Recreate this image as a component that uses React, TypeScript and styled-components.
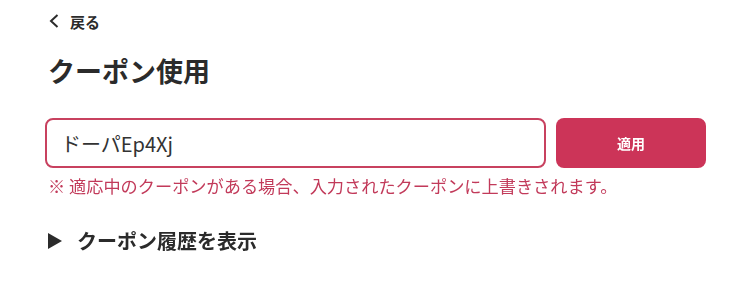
import React, { useState } from "react";
import styled, { createGlobalStyle } from "styled-components";

const GlobalStyle = createGlobalStyle`
  html, body {
    margin: 0;
    padding: 0;
    background: #fff;
  }
  body {
    font-family: "Noto Sans CJK JP", "Noto Sans", sans-serif;
    color: #2b2b2b;
  }
`

const Page = styled.div`
  width: 661px;
  padding: 9px 0 0 45px;
`

const BackLink = styled.a`
  display: flex;
  align-items: center;
  gap: 10px;
  padding-left: 3px;
  font-size: 15px;
  font-weight: 700;
  color: #2b2b2b;
  text-decoration: none;
  height: 24px;
  cursor: pointer;
`

const Title = styled.h1`
  margin: 20px 0 0 3px;
  font-size: 27px;
  font-weight: 700;
  line-height: 36px;
  color: #2b2b2b;
`

const FormRow = styled.div`
  display: flex;
  gap: 10px;
  margin-top: 29px;
`

const CodeInput = styled.input`
  box-sizing: border-box;
  flex: 1;
  height: 50px;
  border: 2px solid #c8415f;
  border-radius: 8px;
  padding: 0 14px;
  font-family: "Noto Sans CJK JP", "Noto Sans", sans-serif;
  font-size: 20px;
  color: #333;
  outline: none;
  caret-color: #333;
`

const ApplyButton = styled.button`
  flex: 0 0 150px;
  height: 50px;
  border: none;
  border-radius: 8px;
  background: #cc3458;
  color: #fff;
  font-family: "Noto Sans CJK JP", "Noto Sans", sans-serif;
  font-size: 14px;
  font-weight: 700;
  cursor: pointer;
`

const Notice = styled.p`
  margin: 6px 0 0 3px;
  font-size: 17.2px;
  line-height: 24px;
  color: #c23a5a;
`

const HistoryToggle = styled.div`
  display: flex;
  align-items: center;
  gap: 15px;
  margin: 29px 0 0 3px;
  font-size: 20px;
  font-weight: 700;
  line-height: 28px;
  color: #2b2b2b;
  cursor: pointer;
`

const Triangle = styled.span`
  width: 0;
  height: 0;
  border-top: 8px solid transparent;
  border-bottom: 8px solid transparent;
  border-left: 14px solid #2b2b2b;
`

export default function App() {
    const [code, setCode] = useState("ドーパEp4Xj");

    return (
        <>
            <GlobalStyle/>
            <Page>
                <BackLink>
                    <svg width="12" height="16" viewBox="0 0 12 16" fill="none">
                        <path d="M9.5 2L3 8l6.5 6" stroke="#2b2b2b" strokeWidth="2"/>
                    </svg>
                    戻る
                </BackLink>
                <Title>クーポン使用</Title>
                <FormRow>
                    <CodeInput value={code} onChange={e => setCode(e.target.value)} autoFocus/>
                    <ApplyButton>適用</ApplyButton>
                </FormRow>
                <Notice>※ 適応中のクーポンがある場合、入力されたクーポンに上書きされます。</Notice>
                <HistoryToggle>
                    <Triangle/>
                    クーポン履歴を表示
                </HistoryToggle>
            </Page>
        </>
    );
}
